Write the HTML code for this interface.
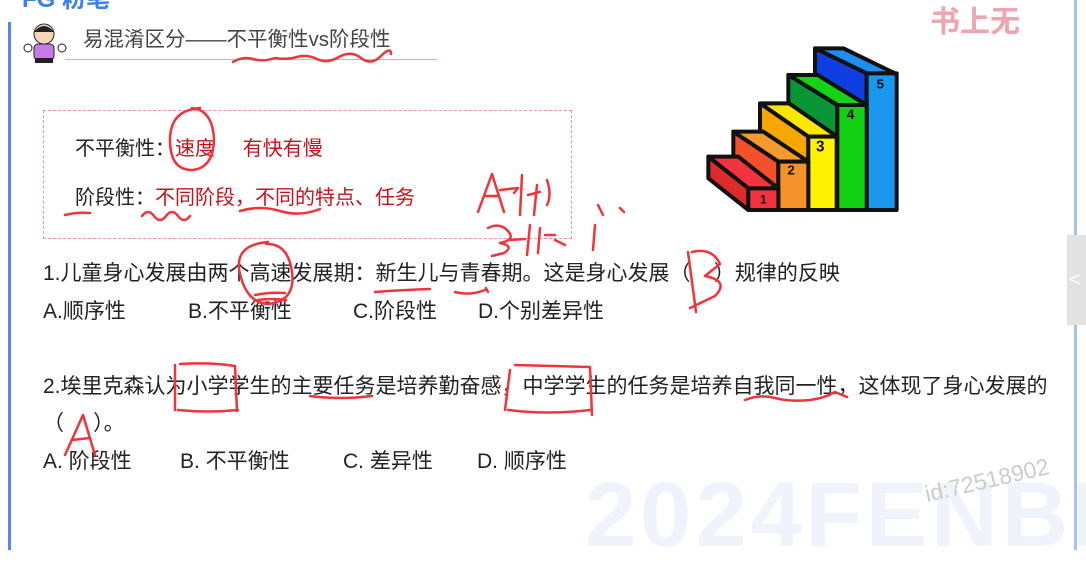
<!DOCTYPE html>
<html><head><meta charset="utf-8"><style>
body{margin:0;width:1086px;height:550px;overflow:hidden;background:#fff;position:relative;font-family:"Liberation Sans","Noto Sans CJK SC",sans-serif;color:#222}
.t{position:absolute;white-space:nowrap;font-size:21px;line-height:24px}
.r{color:#c8101a}
</style></head><body>
<div style="position:absolute;left:8px;top:22px;width:3px;height:528px;background:#5b86f0"></div>
<div style="position:absolute;left:1074px;top:0;width:3px;height:550px;background:#a9bff7"></div>
<div style="position:absolute;left:1067px;top:235px;width:19px;height:90px;background:#e2e2e2"></div>
<div class="t" style="left:1069px;top:268px;color:#fff;font-size:20px">&lt;</div>
<div class="t" style="left:22px;top:-12px;font-size:24px;font-weight:bold;color:#3a7ef0">FG 粉笔</div>
<div class="t" style="left:930px;top:6px;font-size:30px;line-height:34px;font-weight:bold;color:#f0a3b0">书上无</div>
<div class="t" style="left:585px;top:468px;font-size:92px;line-height:94px;font-weight:bold;color:#f0f3fc;letter-spacing:4px">2024FENBI</div>
<div class="t" style="left:928px;top:482px;font-size:23px;color:#ccc;transform:rotate(-13deg);transform-origin:left bottom">id:72518902</div>
<svg style="position:absolute;left:22px;top:18px" width="48" height="46"><rect x="12" y="26" width="20" height="16" rx="4" fill="#c67be8" stroke="#222"/><rect x="13" y="40" width="18" height="5" fill="#222"/><circle cx="22" cy="16" r="10" fill="#f6d6b8" stroke="#222"/><path d="M12 14q10-12 20 0" fill="#222"/><circle cx="6" cy="30" r="4" fill="#fff" stroke="#222"/><circle cx="40" cy="30" r="4" fill="#fff" stroke="#222"/></svg>
<div class="t" style="left:83px;top:28px;font-size:20.5px;color:#444">易混淆区分——不平衡性vs阶段性</div>
<div style="position:absolute;left:65px;top:59px;width:372px;height:1px;background:#f4a0b4"></div>
<div style="position:absolute;left:43px;top:110px;width:527px;height:127px;border:1px dashed #f090b0"></div>
<div class="t" style="left:75px;top:137px;font-size:20px">不平衡性：<span class="r">速度</span>&nbsp;&nbsp;&nbsp;&nbsp;&nbsp;<span class="r">有快有慢</span></div>
<div class="t" style="left:75px;top:186px;font-size:20px">阶段性：<span class="r">不同阶段，不同的特点、任务</span></div>
<svg style="position:absolute;left:700px;top:35px" width="210" height="185" viewBox="0 0 630 555" stroke="#111" stroke-width="12" stroke-linejoin="round">
<polygon points="500,115 585,115 430,40 345,40" fill="#1c8ff0"/><polygon points="345,40 500,115 500,525 345,450" fill="#0f3fe0"/><polygon points="500,115 590,115 590,525 500,525" fill="#1a98f0"/>
<polygon points="412,210 500,210 353,120 265,120" fill="#14d414"/><polygon points="265,120 412,210 412,525 265,435" fill="#0a9636"/><polygon points="412,210 500,210 500,525 412,525" fill="#12d012"/>
<polygon points="325,305 412,305 267,205 180,205" fill="#ffe600"/><polygon points="180,205 325,305 325,525 180,425" fill="#f7a700"/><polygon points="325,305 410,305 410,525 325,525" fill="#fff200"/>
<polygon points="235,380 325,380 190,290 100,290" fill="#f79a2e"/><polygon points="100,290 235,380 235,525 100,435" fill="#f4502a"/><polygon points="235,380 325,380 325,525 235,525" fill="#f7922a"/>
<polygon points="145,460 235,460 115,365 25,365" fill="#f5333f"/><polygon points="25,365 145,460 145,525 25,430" fill="#dd2a2a"/><polygon points="145,460 235,460 235,525 145,525" fill="#f2333d"/>
<g stroke="none" fill="#111" font-weight="bold" font-family="Liberation Sans"><text x="180" y="505" font-size="36">1</text><text x="262" y="418" font-size="40">2</text><text x="348" y="350" font-size="46">3</text><text x="440" y="252" font-size="42">4</text><text x="530" y="160" font-size="40">5</text></g>
</svg>
<div class="t" style="left:43px;top:262px">1.儿童身心发展由两个高速发展期：新生儿与青春期。这是身心发展（&nbsp;&nbsp;&nbsp;&nbsp;）规律的反映</div>
<div class="t" style="left:43px;top:300px">A.顺序性</div><div class="t" style="left:188px;top:300px">B.不平衡性</div><div class="t" style="left:353px;top:300px">C.阶段性</div><div class="t" style="left:478px;top:300px">D.个别差异性</div>
<div class="t" style="left:43px;top:375px">2.埃里克森认为小学学生的主要任务是培养勤奋感，中学学生的任务是培养自我同一性，这体现了身心发展的</div>
<div class="t" style="left:43px;top:412px">（&nbsp;&nbsp;&nbsp;&nbsp;&nbsp;）。</div>
<div class="t" style="left:43px;top:450px">A. 阶段性</div><div class="t" style="left:180px;top:450px">B. 不平衡性</div><div class="t" style="left:343px;top:450px">C. 差异性</div><div class="t" style="left:477px;top:450px">D. 顺序性</div>
<svg style="position:absolute;left:0;top:0" width="1086" height="550" fill="none" stroke="#f0343c" stroke-width="2.5" stroke-linecap="round" stroke-linejoin="round">
<path d="M233 62q10-6 20-3t22-1q12 2 22-1t20 2 22-2 22 1 20-2 10-2"/>
<path d="M200 108q-30 2-30 32t22 30q22-2 22-32-2-28-22-30"/>
<path d="M65 215q12-3 25-2M142 216q6-8 12 0t12 0 12 0 12 0M240 211q20-6 40 0t40-2"/>
<path d="M268 242q-35 3-28 32t28 30q28-3 24-32t-26-28M255 295q15-3 30-2M258 300q15-2 28 0"/>
<path d="M375 292q25-2 55-3M455 292q15 4 30-2M486 288l2 4"/>
<path d="M478 212l14-38 12 38M484 196l14 0M500 190l18-2-4 5M522 175l-2 40M537 185l-3 30M528 195l12-3M547 180q5 15 0 25"/>
<path d="M488 228q12-6 20 3t-8 12q15 3 4 10l-12 3M510 240l15-1M530 225l-3 30M540 228l-2 25M545 235l10 0M555 240l10 5M595 225l-2 25M598 205l5 10 M620 208l4 4"/>
<path d="M688 252l8 60M692 252q20-5 28 12l-15 12q25 5 10 20l-25 12"/>
<path d="M175 365l0 45M180 364q30-2 55 2l2 45M178 410q30 3 60 0"/>
<path d="M310 396q30 4 62 0"/>
<path d="M510 370l-5 40M515 365l75 2 2 48M508 410q40 5 82 0"/>
<path d="M745 400q15-6 30-2t35 2q15-2 25-8l12 5"/>
<path d="M65 455l18-40 12 40M72 440l18-2"/>
</svg>
</body></html>
